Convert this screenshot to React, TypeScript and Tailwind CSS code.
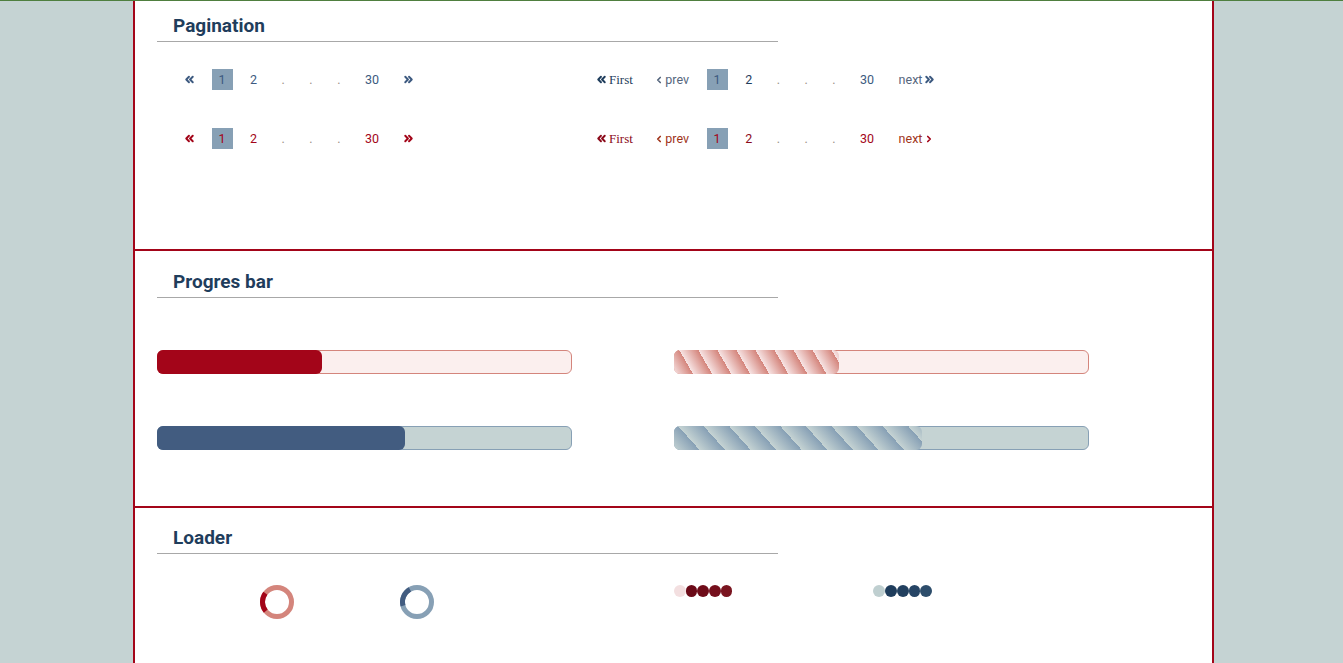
import { ChevronLeft, ChevronRight, ChevronsLeft, ChevronsRight } from "lucide-react";

type Tone = "blue" | "red";

const tones = {
  blue: { text: "text-[#3d5a80]", strong: "text-[#1f3d5c]", prev: "text-[#55667d]" },
  red: { text: "text-[#a30519]", strong: "text-[#8b0a1a]", prev: "text-[#a0341a]" },
};

function Heading({ title }: { title: string }) {
  return (
    <div className="w-[621px] border-b border-[#a8a8a8] pb-[3px] pl-4">
      <h2 className="text-[19px] leading-6 font-bold text-[#1f3d5c]">{title}</h2>
    </div>
  );
}

function Item({
  children,
  className = "",
  pad = "px-[7px]",
}: {
  children: React.ReactNode;
  className?: string;
  pad?: string;
}) {
  return (
    <span className={`flex h-[21px] items-center text-[12.5px] leading-[21px] ${pad} ${className}`}>{children}</span>
  );
}

function Dots() {
  return (
    <>
      {[0, 1, 2].map((i) => (
        <Item key={i} className="text-[#9a8f86]">
          .
        </Item>
      ))}
    </>
  );
}

function SimplePager({ tone }: { tone: Tone }) {
  const t = tones[tone];
  return (
    <div className={`flex items-center gap-[10.5px] ${t.text}`}>
      <Item pad="px-[5px]">
        <ChevronsLeft size={13} strokeWidth={3.6} />
      </Item>
      <Item className="bg-[#87a0b5]">1</Item>
      <Item>2</Item>
      <Dots />
      <Item>30</Item>
      <Item pad="px-[5px]">
        <ChevronsRight size={13} strokeWidth={3.6} />
      </Item>
    </div>
  );
}

function FullPager({ tone }: { tone: Tone }) {
  const t = tones[tone];
  return (
    <div className={`flex items-center gap-[10.5px] ${t.text}`}>
      <Item pad="pl-[5px] pr-[6px]" className={`${t.strong} font-['Liberation_Serif',serif] text-[13px]`}>
        <ChevronsLeft size={13} strokeWidth={3.6} />
        <span className="ml-[1px]">First</span>
      </Item>
      <Item pad="pl-[5px] pr-[7px]" className={t.prev}>
        <ChevronLeft size={10} strokeWidth={4} />
        <span className="ml-[1px]">prev</span>
      </Item>
      <Item className="bg-[#87a0b5]">1</Item>
      <Item className={t.strong}>2</Item>
      <Dots />
      <Item>30</Item>
      <Item pad="pl-[7px] pr-[5px]" className={t.prev}>
        next
        {tone === "blue" ? (
          <ChevronsRight size={13} strokeWidth={3.6} className="ml-[1px] text-[#3d5a80]" />
        ) : (
          <ChevronRight size={10} strokeWidth={4} className="ml-[2px] text-[#a30519]" />
        )}
      </Item>
    </div>
  );
}

function Bar({ pct, track, border, fill }: { pct: number; track: string; border: string; fill: string }) {
  return (
    <div className={`relative h-6 w-[415px] rounded-[6px] border ${track} ${border}`}>
      <div className={`absolute -top-px -bottom-px -left-px rounded-[6px] ${fill}`} style={{ width: `${pct}%` }} />
    </div>
  );
}

function Ring({ light, dark, start }: { light: string; dark: string; start: number }) {
  return (
    <svg width="34" height="34" viewBox="0 0 34 34">
      <circle cx="17" cy="17" r="14.5" fill="none" stroke={light} strokeWidth="5" />
      <circle
        cx="17"
        cy="17"
        r="14.5"
        fill="none"
        stroke={dark}
        strokeWidth="5"
        strokeDasharray="19 92"
        transform={`rotate(${start} 17 17)`}
      />
    </svg>
  );
}

function DotLoader({ colors }: { colors: string[] }) {
  return (
    <div className="flex">
      {colors.map((c, i) => (
        <span key={i} className={`h-3 w-[11.7px] rounded-full ${c}`} />
      ))}
    </div>
  );
}

export default function App() {
  return (
    <div className="min-h-screen border-t border-[#4f7f3f] bg-[#c5d3d3] font-['Roboto','Liberation_Sans',sans-serif]">
      <div className="ml-[133px] w-[1081px] border-x-2 border-[#a30519] bg-white">
        <section className="h-[250px] border-b-2 border-[#a30519] pt-[13px] pl-[22px]">
          <Heading title="Pagination" />
          <div className="mt-[27px] flex flex-col gap-[38px]">
            <div className="flex">
              <div className="ml-[21px] w-[412px]">
                <SimplePager tone="blue" />
              </div>
              <FullPager tone="blue" />
            </div>
            <div className="flex">
              <div className="ml-[21px] w-[412px]">
                <SimplePager tone="red" />
              </div>
              <FullPager tone="red" />
            </div>
          </div>
        </section>

        <section className="h-[257px] border-b-2 border-[#a30519] pt-[19px] pl-[22px]">
          <Heading title="Progres bar" />
          <div className="mt-[52px] grid w-[932px] grid-cols-[415px_415px] gap-x-[102px] gap-y-[52px]">
            <Bar pct={40} track="bg-[#fbefee]" border="border-[#d4857c]" fill="bg-[#a30519]" />
            <Bar
              pct={40}
              track="bg-[#fbefee]"
              border="border-[#d4857c]"
              fill="bg-[repeating-linear-gradient(60deg,#f7e4e4_0px,#d4857c_16.5px)]"
            />
            <Bar pct={60} track="bg-[#c5d3d3]" border="border-[#87a0b5]" fill="bg-[#425c80]" />
            <Bar
              pct={60}
              track="bg-[#c5d3d3]"
              border="border-[#87a0b5]"
              fill="bg-[repeating-linear-gradient(48deg,#c5d3d3_0px,#87a0b5_19px)]"
            />
          </div>
        </section>

        <section className="h-[257px] pt-[18px] pl-[22px]">
          <Heading title="Loader" />
          <div className="mt-[31px] flex items-start">
            <div className="ml-[103px]">
              <Ring light="#d4857c" dark="#a30519" start={141} />
            </div>
            <div className="ml-[106px]">
              <Ring light="#87a0b5" dark="#425c80" start={165} />
            </div>
            <div className="ml-[240px]">
              <DotLoader colors={["bg-[#f3dfe0]", "bg-[#6b0a18]", "bg-[#6f0c19]", "bg-[#750f1c]", "bg-[#7a1520]"]} />
            </div>
            <div className="ml-[141px]">
              <DotLoader colors={["bg-[#bfcfd0]", "bg-[#1f3d5c]", "bg-[#22405f]", "bg-[#264565]", "bg-[#2d4d6b]"]} />
            </div>
          </div>
        </section>
      </div>
    </div>
  );
}
